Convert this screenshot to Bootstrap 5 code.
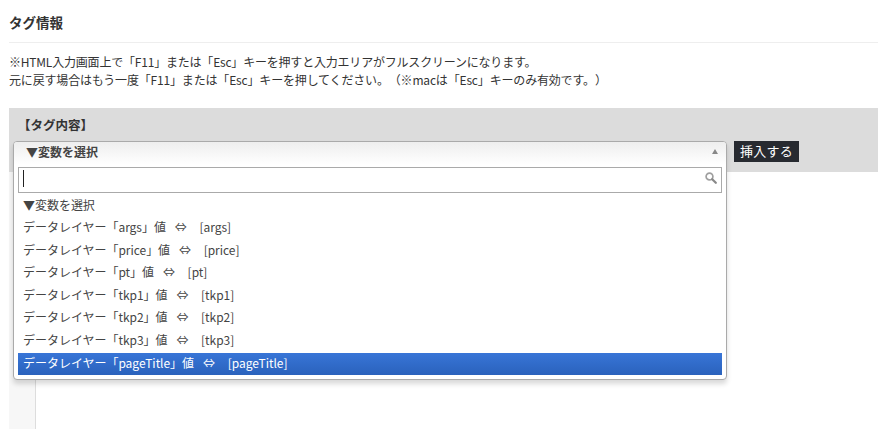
<!DOCTYPE html>
<html lang="ja">
<head>
<meta charset="utf-8">
<title>タグ情報</title>
<link rel="stylesheet" href="https://cdn.jsdelivr.net/npm/bootstrap@5.3.0/dist/css/bootstrap.min.css">
<style>
html,body{height:100%;overflow:hidden}
body{font-family:"Noto Sans CJK JP","Open Sans",sans-serif;font-size:12px;color:#333;background:#fff;text-spacing-trim:space-all}
.tag-page{padding-left:9px;height:429px;display:flex;flex-direction:column}
.tag-title{font-size:13.5px;font-weight:700;line-height:18px;margin:0;padding:13px 0 11px;border-bottom:1px solid #eee;color:#333}
.tag-note{margin:0;padding-top:10px;line-height:18px;height:65px;font-size:12px}
.note-tight{letter-spacing:-.2px}
.note-tighter{letter-spacing:-.17px}
.tag-band{background:#dcdcdc;height:64px;position:relative;flex:none}
.tag-label{font-weight:700;font-size:12.5px;line-height:18px;padding:8px 0 0 9px;margin:0}
.tag-controls{padding:7px 0 0 5px;gap:6px}
.sel-spacer{width:714px;height:21px}
.insert-btn{--bs-btn-padding-x:0;--bs-btn-padding-y:0;--bs-btn-border-radius:0;--bs-btn-border-width:0;--bs-btn-font-size:13px;--bs-btn-line-height:19px;--bs-btn-bg:#272a30;--bs-btn-color:#fff;width:65px;height:21px;padding-bottom:2px;letter-spacing:.3px}
.editor-area{flex:1;display:flex}
.editor-gutter{width:27px;background:#f7f7f7;border-right:1px solid #ddd}
.sel-drop{position:absolute;left:4px;top:33px;width:714px;height:239px;background:#fff;border:1px solid #aaa;border-radius:4px;box-shadow:0 4px 5px rgba(0,0,0,.15);overflow:hidden;z-index:5}
.sel-head{height:25px;padding:0 8px 0 12px;background:linear-gradient(to bottom,#eee,#fff 90%);font-weight:700;font-size:12px;line-height:19px;color:#444}
.sel-tri{margin-top:7px}
.sel-search{height:26px;margin:0 4px;border:1px solid #aaa;padding:2px 4px 0 4px}
.sel-caret{display:block;width:1px;height:17px;background:#222}
.sel-glass{margin-top:2px}
.sel-list{padding:.75px 4px 0}
.sel-opt{height:22.5px;line-height:21.5px;padding-left:5px;color:#444;white-space:pre;letter-spacing:-.03px}
.sel-opt.is-active{height:22px;margin-top:1.75px;line-height:19.5px;background:linear-gradient(to bottom,#3875d7,#2a62bc);color:#fff}
</style>
</head>
<body>
<div class="tag-page">
  <h2 class="tag-title">タグ情報</h2>
  <p class="tag-note"><span class="note-tight">※HTML入力画面上で「F11」または「Esc」キーを押すと入力エリアがフルスクリーンになります。</span><br><span class="note-tighter">元に戻す場合はもう一度「F11」または「Esc」キーを押してください。（※macは「Esc」キーのみ有効です。）</span></p>
  <div class="tag-band">
    <p class="tag-label">【タグ内容】</p>
    <div class="tag-controls d-flex align-items-start">
      <div class="sel-spacer"></div>
      <button type="button" class="btn insert-btn">挿入する</button>
    </div>
    <div class="sel-drop">
      <div class="sel-head d-flex justify-content-between align-items-start">
        <span>▼変数を選択</span>
        <svg class="sel-tri" width="6" height="5" viewBox="0 0 6 5"><path d="M3 0 6 5H0z" fill="#888"/></svg>
      </div>
      <div class="sel-search d-flex justify-content-between align-items-start">
        <span class="sel-caret"></span>
        <svg class="sel-glass" width="12" height="12" viewBox="0 0 12 12"><circle cx="4.5" cy="4.5" r="3.4" fill="none" stroke="#a0a0a0" stroke-width="1.7"/><path d="M7.2 7.2 10.8 10.8" stroke="#888" stroke-width="2.2" stroke-linecap="round"/></svg>
      </div>
      <div class="sel-list">
        <div class="sel-opt">▼変数を選択</div>
        <div class="sel-opt">データレイヤー「args」値&ensp;&#8197;⇔　&#8202;[args]</div>
        <div class="sel-opt">データレイヤー「price」値&ensp;&#8197;⇔　&#8202;[price]</div>
        <div class="sel-opt">データレイヤー「pt」値&ensp;&#8197;⇔　&#8202;[pt]</div>
        <div class="sel-opt">データレイヤー「tkp1」値&ensp;&#8197;⇔　&#8202;[tkp1]</div>
        <div class="sel-opt">データレイヤー「tkp2」値&ensp;&#8197;⇔　&#8202;[tkp2]</div>
        <div class="sel-opt">データレイヤー「tkp3」値&ensp;&#8197;⇔　&#8202;[tkp3]</div>
        <div class="sel-opt is-active">データレイヤー「pageTitle」値&ensp;&#8197;⇔　&#8202;[pageTitle]</div>
      </div>
    </div>
  </div>
  <div class="editor-area"><div class="editor-gutter"></div></div>
</div>
<script src="https://cdn.jsdelivr.net/npm/bootstrap@5.3.0/dist/js/bootstrap.bundle.min.js"></script>
</body>
</html>
